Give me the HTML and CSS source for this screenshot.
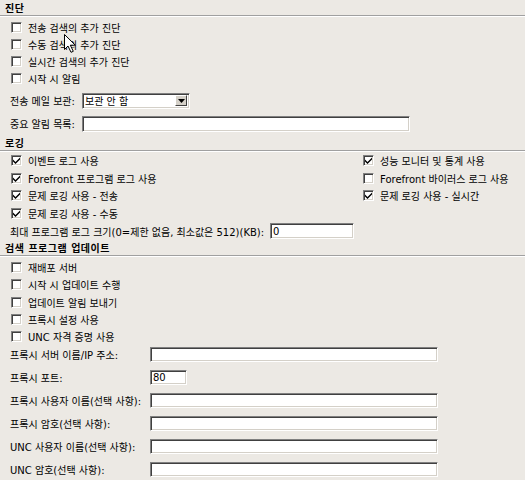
FILE: index.html
```html
<!DOCTYPE html>
<html lang="ko">
<head>
  <meta charset="UTF-8" />
  <title>검색 옵션</title>
  <link rel="stylesheet" href="styles.css">
</head>
<body>
  <div class="panel">

    <h2 class="group-title">진단</h2>
    <div class="group">
      <label class="check"><span class="box"></span>전송 검색의 추가 진단</label>
      <label class="check"><span class="box"></span>수동 검색의 추가 진단</label>
      <label class="check"><span class="box"></span>실시간 검색의 추가 진단</label>
      <label class="check"><span class="box"></span>시작 시 알림</label>
      <div class="field field-short first">
        <span class="field-label">전송 메일 보관:</span>
        <div class="select">보관 안 함<span class="select-btn"><svg width="7" height="4" viewBox="0 0 7 4"><path d="M0 0h7L3.5 4z" fill="#000"/></svg></span></div>
      </div>
      <div class="field field-short">
        <span class="field-label">중요 알림 목록:</span>
        <input class="text wide" type="text" value="">
      </div>
    </div>

    <h2 class="group-title">로깅</h2>
    <div class="group">
      <div class="columns">
        <label class="check"><span class="box on"></span>이벤트 로그 사용</label>
        <label class="check"><span class="box on"></span>성능 모니터 및 통계 사용</label>
        <label class="check"><span class="box on"></span>Forefront 프로그램 로그 사용</label>
        <label class="check"><span class="box"></span>Forefront 바이러스 로그 사용</label>
        <label class="check"><span class="box on"></span>문제 로깅 사용 - 전송</label>
        <label class="check"><span class="box on"></span>문제 로깅 사용 - 실시간</label>
        <label class="check"><span class="box on"></span>문제 로깅 사용 - 수동</label>
      </div>
      <div class="field field-log">
        <span class="field-label">최대 프로그램 로그 크기(0=제한 없음, 최소값은 512)(KB):</span>
        <input class="text log-size" type="text" value="0">
      </div>
    </div>

    <h2 class="group-title">검색 프로그램 업데이트</h2>
    <div class="group">
      <div class="updates">
        <label class="check"><span class="box"></span>재배포 서버</label>
        <label class="check"><span class="box"></span>시작 시 업데이트 수행</label>
        <label class="check"><span class="box"></span>업데이트 알림 보내기</label>
        <label class="check"><span class="box"></span>프록시 설정 사용</label>
        <label class="check"><span class="box"></span>UNC 자격 증명 사용</label>
      </div>
      <div class="proxy">
        <span class="field-label">프록시 서버 이름/IP 주소:</span>
        <input class="text" type="text" value="">
        <span class="field-label">프록시 포트:</span>
        <input class="text port" type="text" value="80">
        <span class="field-label">프록시 사용자 이름(선택 사항):</span>
        <input class="text" type="text" value="">
        <span class="field-label">프록시 암호(선택 사항):</span>
        <input class="text" type="password" value="">
        <span class="field-label">UNC 사용자 이름(선택 사항):</span>
        <input class="text" type="text" value="">
        <span class="field-label">UNC 암호(선택 사항):</span>
        <input class="text" type="password" value="">
      </div>
    </div>

    <!-- mouse pointer caught in the screenshot -->
    <svg class="cursor" width="12" height="19" viewBox="0 0 12 19">
      <path d="M0.5 0.5v15l3.5-3.5 3 6.3 2.3-1-3-6.1h5z" fill="#fff" stroke="#000"/>
    </svg>
  </div>

  <script>
    // checked boxes get their tick
    document.querySelectorAll(".box.on").forEach(b => {
      b.innerHTML = '<svg width="7" height="7" viewBox="0 0 7 7"><path d="M0 2.5l2.5 2.5L7 0.5v2L2.5 7 0 4.5z" fill="#000"/></svg>';
    });
  </script>
</body>
</html>
```

FILE: styles.css
```css
body {
  margin: 0;
  background: #ece9e4;
  font-family: "DejaVu Sans", "Noto Sans CJK KR", sans-serif;
  font-size: 10px;
  color: #000;
}
.panel {
  position: relative;
}
.group-title {
  margin: 0;
  padding: 3px 0 0 5px;
  height: 12px;
  line-height: 12px;
  font-size: 10px;
  font-weight: bold;
  letter-spacing: 0.5px;
  border-bottom: 1px solid #a0a0a0;
  box-shadow: 0 1px 0 #fff;
}
.group {
  padding: 3px 0 0 10px;
}
.check {
  display: flex;
  align-items: center;
  height: 17px;
  white-space: nowrap;
}
.box {
  display: inline-flex;
  align-items: center;
  justify-content: center;
  box-sizing: border-box;
  width: 11px;
  height: 11px;
  margin: 0 6px 0 1px;
  background: #fff;
  border: 1px solid;
  border-color: #808080 #fff #fff #808080;
  box-shadow: inset 1px 1px 0 #404040, inset -1px -1px 0 #d4d0c8;
}
.field {
  display: flex;
  align-items: center;
  height: 23px;
}
.field.first {
  margin-top: 2px;
}
.field-short .field-label {
  width: 72px;
}
.field-label {
  white-space: nowrap;
}
.text,
.select {
  box-sizing: border-box;
  height: 16px;
  padding: 0 2px;
  font-family: inherit;
  font-size: 10px;
  background: #fff;
  border: 1px solid;
  border-color: #808080 #fff #fff #808080;
  box-shadow: inset 1px 1px 0 #404040, inset -1px -1px 0 #d4d0c8;
  outline: none;
}
.select {
  display: flex;
  align-items: center;
  justify-content: space-between;
  width: 108px;
  padding-right: 2px;
}
.select-btn {
  display: flex;
  align-items: center;
  justify-content: center;
  box-sizing: border-box;
  width: 12px;
  height: 11px;
  background: #d4d0c8;
  border: 1px solid;
  border-color: #fff #404040 #404040 #fff;
}
.wide {
  width: 328px;
}

/* logging */
.group:nth-of-type(2) {
  padding-top: 1px;
}
.columns {
  display: grid;
  grid-template-columns: 352px 1fr;
  grid-auto-rows: 17.5px;
}
.field-log {
  height: 18px;
}
.log-size {
  width: 84px;
  margin-left: 6px;
}

/* updates */
.updates .check {
  height: 17.3px;
}
.proxy {
  display: grid;
  grid-template-columns: 140px 288px;
  grid-auto-rows: 23px;
  align-items: center;
  margin-top: -2px;
}
.proxy .text {
  width: 288px;
  height: 15px;
}
.proxy .port {
  width: 37px;
}
.cursor {
  position: absolute;
  left: 64px;
  top: 34px;
}
```
